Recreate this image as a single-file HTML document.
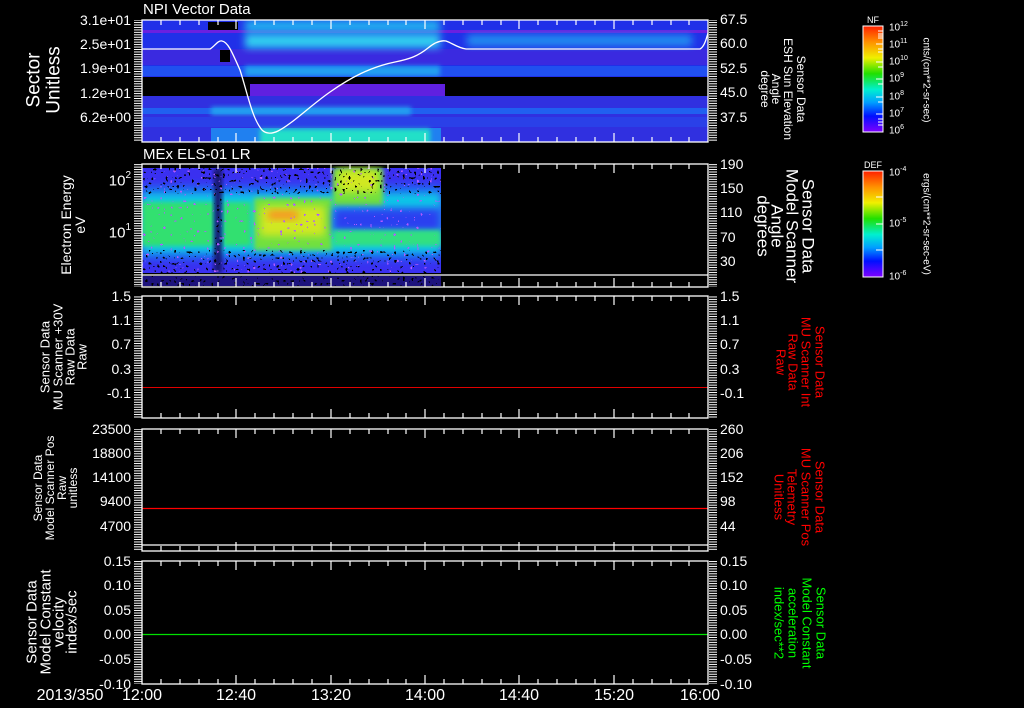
<!DOCTYPE html>
<html><head><meta charset="utf-8"><style>
html,body{margin:0;padding:0;background:#000;}
svg{display:block;font-family:"Liberation Sans",sans-serif;}
</style></head><body>
<svg width="1024" height="708" viewBox="0 0 1024 708" xmlns="http://www.w3.org/2000/svg">
<defs>
<pattern id="ytick" x="0" y="0" width="10" height="2.45" patternUnits="userSpaceOnUse"><rect x="0" y="0" width="10" height="1" fill="#fff"/></pattern>
<filter id="spk" x="0" y="0" width="100%" height="100%">
<feTurbulence type="fractalNoise" baseFrequency="0.35" numOctaves="1" seed="3"/>
<feColorMatrix type="matrix" values="0 0 0 0 0  0 0 0 0 0  0 0 0 0 0  0 0 0 -2.2 1.25"/>
<feComponentTransfer><feFuncA type="discrete" tableValues="0 1"/></feComponentTransfer>
</filter>
<filter id="spkc" x="0" y="0" width="100%" height="100%">
<feTurbulence type="fractalNoise" baseFrequency="0.3" numOctaves="1" seed="7"/>
<feColorMatrix type="matrix" values="0 0 0 0 0.45  0 0 0 0 0.1  0 0 0 0 1  0 0 0 -2.5 1.2"/>
<feComponentTransfer><feFuncA type="discrete" tableValues="0 1"/></feComponentTransfer>
</filter>
<filter id="bl" x="-30%" y="-50%" width="160%" height="200%"><feGaussianBlur stdDeviation="4"/></filter>
<filter id="bl2" x="-30%" y="-50%" width="160%" height="200%"><feGaussianBlur stdDeviation="2.5"/></filter>
<linearGradient id="cb" x1="0" y1="0" x2="0" y2="1">
<stop offset="0" stop-color="#ff2000"/><stop offset="0.15" stop-color="#ff9000"/><stop offset="0.3" stop-color="#f0f000"/><stop offset="0.45" stop-color="#20e000"/><stop offset="0.6" stop-color="#00f0d0"/><stop offset="0.72" stop-color="#00a0ff"/><stop offset="0.85" stop-color="#0010ff"/><stop offset="1" stop-color="#8000ff"/>
</linearGradient>
<clipPath id="c1"><rect x="142" y="20" width="566" height="122"/></clipPath>
<clipPath id="c2"><rect x="142" y="166" width="299" height="108"/></clipPath>
</defs>

<!-- Panel 1 spectrogram -->
<g clip-path="url(#c1)">
<rect x="142" y="20" width="566" height="122" fill="#2030e8"/>
<rect x="142" y="30" width="566" height="3" fill="#6a20e0"/>
<rect x="142" y="49" width="566" height="16" fill="#3a2ae0"/>
<rect x="245" y="20" width="195" height="12" fill="#20b0f0" filter="url(#bl)"/>
<rect x="245" y="34" width="195" height="14" fill="#30d0f0" filter="url(#bl)"/>
<rect x="467" y="35" width="225" height="11" fill="#2090f0" filter="url(#bl)"/>
<rect x="142" y="66" width="566" height="10" fill="#2050f0"/>
<rect x="245" y="66" width="195" height="10" fill="#20a0f0" filter="url(#bl2)"/>
<rect x="142" y="77" width="566" height="19" fill="#000"/>
<rect x="250" y="84" width="195" height="12" fill="#6020e0"/>
<rect x="142" y="96" width="566" height="46" fill="#3030e0"/>
<rect x="142" y="108" width="566" height="6" fill="#2060f0"/>
<rect x="211" y="107" width="200" height="8" fill="#20a0f0" filter="url(#bl2)"/>
<rect x="142" y="117" width="566" height="10" fill="#2a40e8"/>
<rect x="211" y="128" width="230" height="14" fill="#2080f0"/>
<rect x="260" y="129" width="170" height="15" fill="#20e0c8" filter="url(#bl2)"/>
<rect x="208" y="22" width="30" height="8" fill="#000"/>
<rect x="220" y="50" width="10" height="12" fill="#000"/>
<path d="M142,49 L210,49 C214,47 218,40 222,41 C228,42 232,52 240,70 C248,95 252,118 262,130 C266,134 272,134 278,131 C292,124 310,106 330,92 C350,78 370,67 395,62 C410,59 418,56 428,48 C434,43 440,40 446,41 C452,43 458,48 466,49 L700,49 C704,47 706,40 708,33" fill="none" stroke="#fff" stroke-width="1.3"/>
</g>

<!-- Panel 2 spectrogram -->
<g clip-path="url(#c2)">
<rect x="142" y="168" width="299" height="105" fill="#3a30f0"/>
<rect x="142" y="185" width="299" height="75" fill="#2060f0" filter="url(#bl)"/>
<rect x="142" y="193" width="299" height="60" fill="#10c8e8" filter="url(#bl)"/>
<rect x="142" y="202" width="72" height="44" fill="#30e070" filter="url(#bl2)"/>
<rect x="223" y="202" width="28" height="44" fill="#30e070" filter="url(#bl2)"/>
<rect x="254" y="198" width="78" height="52" fill="#70e040" filter="url(#bl2)"/>
<rect x="260" y="206" width="65" height="30" fill="#d0e820" filter="url(#bl)"/>
<rect x="268" y="211" width="30" height="8" fill="#ff8820" filter="url(#bl)"/>
<rect x="333" y="168" width="50" height="38" fill="#70e040" filter="url(#bl2)"/>
<rect x="338" y="170" width="40" height="22" fill="#d0e820" filter="url(#bl)"/>
<rect x="333" y="208" width="108" height="24" fill="#2a40f0" filter="url(#bl)"/>
<rect x="333" y="230" width="108" height="16" fill="#30e080" filter="url(#bl2)"/>
<rect x="214" y="168" width="8" height="105" fill="#181870" filter="url(#bl2)"/>
<rect x="142" y="168" width="299" height="26" fill="#000" filter="url(#spk)"/>
<rect x="142" y="250" width="299" height="24" fill="#000" filter="url(#spk)"/>
<rect x="142" y="168" width="299" height="105" fill="#000" filter="url(#spkc)"/>
<rect x="214" y="168" width="8" height="105" fill="#000" filter="url(#spk)"/>
</g>
<rect x="142" y="276" width="299" height="10" fill="#3020d0" opacity="0.6"/>
<rect x="142" y="276" width="299" height="10" fill="#000" filter="url(#spk)"/>

<!-- Lines panels 3-5 -->
<line x1="142" y1="387.5" x2="708" y2="387.5" stroke="#e00000" stroke-width="1"/>
<line x1="142" y1="508.5" x2="708" y2="508.5" stroke="#ff0000" stroke-width="1.3"/>
<line x1="142" y1="634.5" x2="708" y2="634.5" stroke="#00e000" stroke-width="1.3"/>

<!-- Frames -->
<g fill="none" stroke="#fff" stroke-width="1.3">
<rect x="142" y="20" width="566" height="122"/>
<rect x="142" y="164" width="566" height="123"/>
<line x1="142" y1="275" x2="708" y2="275"/>
<rect x="142" y="296" width="566" height="122"/>
<rect x="142" y="429" width="566" height="122"/>
<line x1="142" y1="545" x2="708" y2="545"/>
<rect x="142" y="561" width="566" height="123"/>
</g>

<!-- y dense ticks -->
<g>
<rect x="134" y="20" width="8" height="122" fill="url(#ytick)"/>
<rect x="709" y="20" width="8" height="122" fill="url(#ytick)"/>
<rect x="134" y="164" width="8" height="123" fill="url(#ytick)"/>
<rect x="709" y="164" width="8" height="123" fill="url(#ytick)"/>
<rect x="134" y="296" width="8" height="122" fill="url(#ytick)"/>
<rect x="709" y="296" width="8" height="122" fill="url(#ytick)"/>
<rect x="134" y="429" width="8" height="122" fill="url(#ytick)"/>
<rect x="709" y="429" width="8" height="122" fill="url(#ytick)"/>
<rect x="134" y="561" width="8" height="123" fill="url(#ytick)"/>
<rect x="709" y="561" width="8" height="123" fill="url(#ytick)"/>
</g>

<!-- x ticks -->
<g stroke="#fff" stroke-width="1.2">
<path d="M161,20v5M180,20v5M199,20v5M218,20v5M236,20v9M255,20v5M274,20v5M293,20v5M312,20v5M331,20v9M350,20v5M369,20v5M388,20v5M406,20v5M425,20v9M444,20v5M463,20v5M482,20v5M501,20v5M519,20v9M538,20v5M557,20v5M576,20v5M595,20v5M614,20v9M633,20v5M652,20v5M671,20v5M689,20v5"/>
<path d="M161,142v-5M180,142v-5M199,142v-5M218,142v-5M236,142v-9M255,142v-5M274,142v-5M293,142v-5M312,142v-5M331,142v-9M350,142v-5M369,142v-5M388,142v-5M406,142v-5M425,142v-9M444,142v-5M463,142v-5M482,142v-5M501,142v-5M519,142v-9M538,142v-5M557,142v-5M576,142v-5M595,142v-5M614,142v-9M633,142v-5M652,142v-5M671,142v-5M689,142v-5"/>
<path transform="translate(0,144)" d="M161,20v5M180,20v5M199,20v5M218,20v5M236,20v9M255,20v5M274,20v5M293,20v5M312,20v5M331,20v9M350,20v5M369,20v5M388,20v5M406,20v5M425,20v9M444,20v5M463,20v5M482,20v5M501,20v5M519,20v9M538,20v5M557,20v5M576,20v5M595,20v5M614,20v9M633,20v5M652,20v5M671,20v5M689,20v5"/>
<path transform="translate(0,145)" d="M161,142v-5M180,142v-5M199,142v-5M218,142v-5M236,142v-9M255,142v-5M274,142v-5M293,142v-5M312,142v-5M331,142v-9M350,142v-5M369,142v-5M388,142v-5M406,142v-5M425,142v-9M444,142v-5M463,142v-5M482,142v-5M501,142v-5M519,142v-9M538,142v-5M557,142v-5M576,142v-5M595,142v-5M614,142v-9M633,142v-5M652,142v-5M671,142v-5M689,142v-5"/>
<path transform="translate(0,276)" d="M161,20v5M180,20v5M199,20v5M218,20v5M236,20v9M255,20v5M274,20v5M293,20v5M312,20v5M331,20v9M350,20v5M369,20v5M388,20v5M406,20v5M425,20v9M444,20v5M463,20v5M482,20v5M501,20v5M519,20v9M538,20v5M557,20v5M576,20v5M595,20v5M614,20v9M633,20v5M652,20v5M671,20v5M689,20v5"/>
<path transform="translate(0,276)" d="M161,142v-5M180,142v-5M199,142v-5M218,142v-5M236,142v-9M255,142v-5M274,142v-5M293,142v-5M312,142v-5M331,142v-9M350,142v-5M369,142v-5M388,142v-5M406,142v-5M425,142v-9M444,142v-5M463,142v-5M482,142v-5M501,142v-5M519,142v-9M538,142v-5M557,142v-5M576,142v-5M595,142v-5M614,142v-9M633,142v-5M652,142v-5M671,142v-5M689,142v-5"/>
<path transform="translate(0,409)" d="M161,20v5M180,20v5M199,20v5M218,20v5M236,20v9M255,20v5M274,20v5M293,20v5M312,20v5M331,20v9M350,20v5M369,20v5M388,20v5M406,20v5M425,20v9M444,20v5M463,20v5M482,20v5M501,20v5M519,20v9M538,20v5M557,20v5M576,20v5M595,20v5M614,20v9M633,20v5M652,20v5M671,20v5M689,20v5"/>
<path transform="translate(0,409)" d="M161,142v-5M180,142v-5M199,142v-5M218,142v-5M236,142v-9M255,142v-5M274,142v-5M293,142v-5M312,142v-5M331,142v-9M350,142v-5M369,142v-5M388,142v-5M406,142v-5M425,142v-9M444,142v-5M463,142v-5M482,142v-5M501,142v-5M519,142v-9M538,142v-5M557,142v-5M576,142v-5M595,142v-5M614,142v-9M633,142v-5M652,142v-5M671,142v-5M689,142v-5"/>
<path transform="translate(0,541)" d="M161,20v5M180,20v5M199,20v5M218,20v5M236,20v9M255,20v5M274,20v5M293,20v5M312,20v5M331,20v9M350,20v5M369,20v5M388,20v5M406,20v5M425,20v9M444,20v5M463,20v5M482,20v5M501,20v5M519,20v9M538,20v5M557,20v5M576,20v5M595,20v5M614,20v9M633,20v5M652,20v5M671,20v5M689,20v5"/>
<path transform="translate(0,542)" d="M161,142v-5M180,142v-5M199,142v-5M218,142v-5M236,142v-9M255,142v-5M274,142v-5M293,142v-5M312,142v-5M331,142v-9M350,142v-5M369,142v-5M388,142v-5M406,142v-5M425,142v-9M444,142v-5M463,142v-5M482,142v-5M501,142v-5M519,142v-9M538,142v-5M557,142v-5M576,142v-5M595,142v-5M614,142v-9M633,142v-5M652,142v-5M671,142v-5M689,142v-5"/>
</g>

<!-- Titles -->
<g fill="#fff" font-size="15">
<text x="143" y="14">NPI Vector Data</text>
<text x="143" y="159">MEx ELS-01 LR</text>
</g>

<!-- Left tick labels -->
<g fill="#fff" font-size="14" text-anchor="end" dominant-baseline="central">
<text x="131" y="20">3.1e+01</text><text x="131" y="44">2.5e+01</text><text x="131" y="68">1.9e+01</text><text x="131" y="93">1.2e+01</text><text x="131" y="117">6.2e+00</text>
<text x="131" y="181" font-size="15">10<tspan font-size="10" dy="-6">2</tspan></text>
<text x="131" y="233" font-size="15">10<tspan font-size="10" dy="-6">1</tspan></text>
<text x="131" y="296">1.5</text><text x="131" y="320">1.1</text><text x="131" y="344">0.7</text><text x="131" y="369">0.3</text><text x="131" y="393">-0.1</text>
<text x="131" y="429">23500</text><text x="131" y="453">18800</text><text x="131" y="477">14100</text><text x="131" y="501">9400</text><text x="131" y="526">4700</text>
<text x="131" y="561">0.15</text><text x="131" y="585">0.10</text><text x="131" y="610">0.05</text><text x="131" y="634">0.00</text><text x="131" y="659">-0.05</text><text x="131" y="684">-0.10</text>
</g>
<!-- Right tick labels -->
<g fill="#fff" font-size="14" dominant-baseline="central">
<text x="720" y="19">67.5</text><text x="720" y="43">60.0</text><text x="720" y="68">52.5</text><text x="720" y="92">45.0</text><text x="720" y="117">37.5</text>
<text x="720" y="164">190</text><text x="720" y="188">150</text><text x="720" y="212">110</text><text x="720" y="237">70</text><text x="720" y="261">30</text>
<text x="720" y="296">1.5</text><text x="720" y="320">1.1</text><text x="720" y="344">0.7</text><text x="720" y="369">0.3</text><text x="720" y="393">-0.1</text>
<text x="720" y="429">260</text><text x="720" y="453">206</text><text x="720" y="477">152</text><text x="720" y="501">98</text><text x="720" y="526">44</text>
<text x="720" y="561">0.15</text><text x="720" y="585">0.10</text><text x="720" y="610">0.05</text><text x="720" y="634">0.00</text><text x="720" y="659">-0.05</text><text x="720" y="684">-0.10</text>
</g>

<!-- x labels -->
<g fill="#fff" font-size="16" text-anchor="middle">
<text x="70" y="700">2013/350</text>
<text x="142" y="700">12:00</text><text x="236" y="700">12:40</text><text x="331" y="700">13:20</text><text x="425" y="700">14:00</text><text x="519" y="700">14:40</text><text x="614" y="700">15:20</text><text x="700" y="700">16:00</text>
</g>

<!-- Left axis titles -->
<g fill="#fff" text-anchor="middle" dominant-baseline="central">
<g font-size="19" transform="translate(0,80)"><text transform="translate(34,0) rotate(-90)">Sector</text><text transform="translate(54,0) rotate(-90)">Unitless</text></g>
<g font-size="14" transform="translate(0,225)"><text transform="translate(66,0) rotate(-90)">Electron Energy</text><text transform="translate(80,0) rotate(-90)">eV</text></g>
<g font-size="13" transform="translate(0,357)"><text transform="translate(45,0) rotate(-90)">Sensor Data</text><text transform="translate(58,0) rotate(-90)">MU Scanner +30V</text><text transform="translate(70,0) rotate(-90)">Raw Data</text><text transform="translate(82,0) rotate(-90)">Raw</text></g>
<g font-size="12" transform="translate(0,488)"><text transform="translate(38,0) rotate(-90)">Sensor Data</text><text transform="translate(50,0) rotate(-90)">Model Scanner Pos</text><text transform="translate(62,0) rotate(-90)">Raw</text><text transform="translate(73,0) rotate(-90)">unitless</text></g>
<g font-size="15" transform="translate(0,622)"><text transform="translate(32,0) rotate(-90)">Sensor Data</text><text transform="translate(46,0) rotate(-90)">Model Constant</text><text transform="translate(59,0) rotate(-90)">velocity</text><text transform="translate(72,0) rotate(-90)">index/sec</text></g>
</g>

<!-- Right axis titles -->
<g text-anchor="middle" dominant-baseline="central">
<g fill="#fff" font-size="12" transform="translate(0,89)"><text transform="translate(801,0) rotate(90)">Sensor Data</text><text transform="translate(788,0) rotate(90)">ESH Sun Elevation</text><text transform="translate(776,0) rotate(90)">Angle</text><text transform="translate(765,0) rotate(90)">degree</text></g>
<g fill="#fff" font-size="17" transform="translate(0,226)"><text transform="translate(808,0) rotate(90)">Sensor Data</text><text transform="translate(792,0) rotate(90)">Model Scanner</text><text transform="translate(777,0) rotate(90)">Angle</text><text transform="translate(763,0) rotate(90)">degrees</text></g>
<g fill="#ff0000" font-size="13" transform="translate(0,362)"><text transform="translate(820,0) rotate(90)">Sensor Data</text><text transform="translate(806,0) rotate(90)">MU Scanner Int</text><text transform="translate(793,0) rotate(90)">Raw Data</text><text transform="translate(781,0) rotate(90)">Raw</text></g>
<g fill="#ff0000" font-size="13" transform="translate(0,497)"><text transform="translate(820,0) rotate(90)">Sensor Data</text><text transform="translate(806,0) rotate(90)">MU Scanner Pos</text><text transform="translate(792,0) rotate(90)">Telemetry</text><text transform="translate(779,0) rotate(90)">Unitless</text></g>
<g fill="#00ff00" font-size="13" transform="translate(0,623)"><text transform="translate(821,0) rotate(90)">Sensor Data</text><text transform="translate(807,0) rotate(90)">Model Constant</text><text transform="translate(793,0) rotate(90)">acceleration</text><text transform="translate(779,0) rotate(90)">index/sec**2</text></g>
</g>

<!-- Colorbars -->
<rect x="863" y="26" width="20" height="106" fill="url(#cb)" stroke="#fff" stroke-width="1"/>
<rect x="863" y="171" width="20" height="106" fill="url(#cb)" stroke="#fff" stroke-width="1"/>
<g stroke="#fff" stroke-width="1">
<path d="M878,31h5M878,34h5M878,36h5M878,38h5M876,44h7M878,49h5M878,52h5M876,62h7M878,67h5M876,79h7M878,84h5M876,97h7M878,102h5M876,114h7M878,119h5M878,122h5M878,125h5"/>
<path d="M876,197h7M876,224h7M876,250h7"/>
</g>
<g fill="#fff" font-size="9" text-anchor="middle">
<text x="873" y="23">NF</text><text x="873" y="168">DEF</text>
</g>
<g fill="#fff" font-size="10" dominant-baseline="central">
<text x="889" y="28">10<tspan font-size="7" dy="-4">12</tspan></text>
<text x="889" y="45">10<tspan font-size="7" dy="-4">11</tspan></text>
<text x="889" y="62">10<tspan font-size="7" dy="-4">10</tspan></text>
<text x="889" y="79">10<tspan font-size="7" dy="-4">9</tspan></text>
<text x="889" y="97">10<tspan font-size="7" dy="-4">8</tspan></text>
<text x="889" y="114">10<tspan font-size="7" dy="-4">7</tspan></text>
<text x="889" y="131">10<tspan font-size="7" dy="-4">6</tspan></text>
<text x="889" y="173">10<tspan font-size="7" dy="-4">-4</tspan></text>
<text x="889" y="224">10<tspan font-size="7" dy="-4">-5</tspan></text>
<text x="889" y="277">10<tspan font-size="7" dy="-4">-6</tspan></text>
</g>
<g fill="#fff" font-size="10" text-anchor="middle" dominant-baseline="central">
<text transform="translate(926,80) rotate(90)">cnts/(cm**2-sr-sec)</text>
<text transform="translate(926,224) rotate(90)">ergs/(cm**2-sr-sec-eV)</text>
</g>
</svg>
</body></html>
